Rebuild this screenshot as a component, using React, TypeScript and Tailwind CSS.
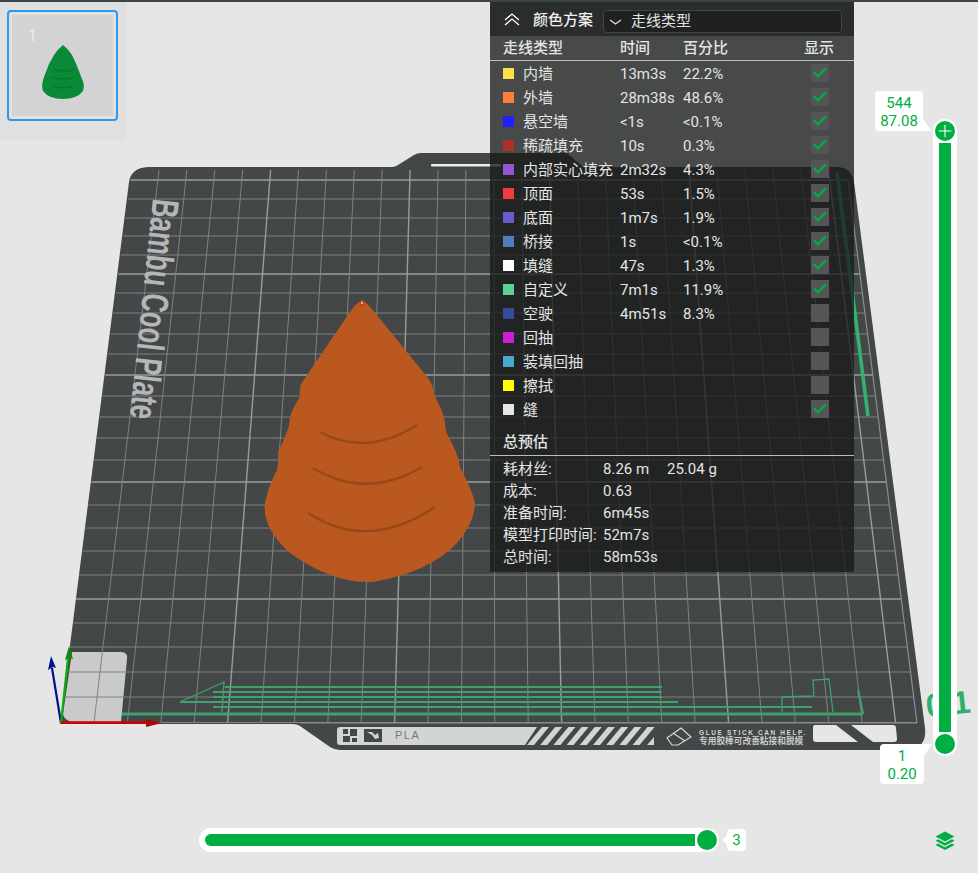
import React from 'react';
import { Check, Plus } from 'lucide-react';

const sans = "font-['Roboto','Noto_Sans_CJK_SC',sans-serif]";

const rows = [
  { name: '内墙', color: '#ffe04a', time: '13m3s', pct: '22.2%', on: true },
  { name: '外墙', color: '#ff7d38', time: '28m38s', pct: '48.6%', on: true },
  { name: '悬空墙', color: '#1f1fff', time: '<1s', pct: '<0.1%', on: true },
  { name: '稀疏填充', color: '#b03029', time: '10s', pct: '0.3%', on: true },
  { name: '内部实心填充', color: '#9654cc', time: '2m32s', pct: '4.3%', on: true },
  { name: '顶面', color: '#f03c3c', time: '53s', pct: '1.5%', on: true },
  { name: '底面', color: '#6b5ccc', time: '1m7s', pct: '1.9%', on: true },
  { name: '桥接', color: '#4d80ba', time: '1s', pct: '<0.1%', on: true },
  { name: '填缝', color: '#ffffff', time: '47s', pct: '1.3%', on: true },
  { name: '自定义', color: '#5ed194', time: '7m1s', pct: '11.9%', on: true },
  { name: '空驶', color: '#384a9c', time: '4m51s', pct: '8.3%', on: false },
  { name: '回抽', color: '#cc1fd1', time: '', pct: '', on: false },
  { name: '装填回抽', color: '#4aa8cc', time: '', pct: '', on: false },
  { name: '擦拭', color: '#ffff00', time: '', pct: '', on: false },
  { name: '缝', color: '#e6e6e6', time: '', pct: '', on: true },
];

const summary = [
  { label: '耗材丝:', value: '8.26 m', extra: '25.04 g' },
  { label: '成本:', value: '0.63' },
  { label: '准备时间:', value: '6m45s' },
  { label: '模型打印时间:', value: '52m7s' },
  { label: '总时间:', value: '58m53s' },
];

// bed grid, read off the perspective of the plate
const gridY = [180, 199, 218, 236, 255, 274, 293, 313, 334, 354, 375, 396, 417, 438, 460, 482, 505, 528, 551, 575, 599, 623, 647, 672, 697, 723];
const gridX = Array.from({ length: 25 }, (_, i) => i);

const CONE =
  'M362 300 Q366 302 372 309 L428 378 Q434 386 433 393 Q443 410 445 422 Q445 428 447 434 Q459 455 460 467 Q472 490 475 503 Q475 522 457 543 Q430 572 373 582 Q333 584 290 553 Q262 528 265 503 Q268 487 277 470 Q279 460 278 452 Q286 436 289 426 Q289 412 300 397 Q299 390 301 384 L350 312 Q356 303 362 300 Z';
const coneRings = Array.from({ length: 240 }, (_, i) => i);

function Bed() {
  return (
    <svg className="absolute inset-0" width="978" height="873" viewBox="0 0 978 873">
      <defs>
        <clipPath id="plate">
          <path d="M132 169 L842 169 L848 180 L917 723 L60 723 Z" />
        </clipPath>
        <clipPath id="cone">
          <path d={CONE} />
        </clipPath>
      </defs>

      <path
        d="M148 167 L392 167 Q395 167 398 165 L414 155 Q417 153 421 153 L567 153 L583 167 L838 167 Q852 168 854 182 L925 728 Q927 748 908 750 L340 750 Q335 750 330 747 L300 726 Q297 724 292 724 L60 724 L129 182 Q131 168 148 167 Z"
        fill="#434747"
      />
      <rect x="431" y="164" width="70" height="2.5" rx="1" fill="#eeeeee" />

      <path d="M72 652 L121 652 Q128 652 127 659 L121 722 L72 722 Q64 720 63 714 Z" fill="#c9cbca" />

      <g clipPath="url(#plate)" fill="none">
        {gridY.map((y, i) => (
          <line key={y} x1="40" x2="940" y1={y} y2={y} stroke={i % 5 === 0 ? '#999c9b' : '#7f8382'} strokeWidth={i % 5 === 0 ? 1.4 : 1} />
        ))}
        {gridX.map((i) => (
          <line
            key={i}
            x1={159 + 27.9 * i}
            y1="170"
            x2={94 + 33.4 * i}
            y2="723"
            stroke={i % 5 === 4 ? '#999c9b' : '#7f8382'}
            strokeWidth={i % 5 === 4 ? 1.4 : 1}
          />
        ))}
      </g>
      <path d="M848 180 L917 723 L300 723" fill="none" stroke="#8a8e8d" strokeWidth="1.2" />

      <text
        transform="translate(153 198) rotate(96)"
        textLength="221"
        lengthAdjust="spacingAndGlyphs"
        fontFamily="Liberation Sans, sans-serif"
        fontWeight="700"
        fontSize="38"
        fill="#b5b7b7"
      >
        Bambu Cool Plate
      </text>

      {/* travel / custom toolpath lines on the plate */}
      <g stroke="#3fa16b" fill="none">
        <path d="M225 687 H662 M213 692 H662 M213 697 H662 M180 702 H678 M213 707 H812" strokeWidth="2.2" />
        <path d="M122 714 H863" strokeWidth="3" />
        <path d="M180 702 L224 682 L222 712" strokeWidth="1.3" />
        <path d="M782 712 L782 697 L814 696 L813 680 L829 679 L833 712" strokeWidth="1.3" />
        <path d="M858 690 L863 714" strokeWidth="2.2" />
        <path d="M837 172 L868 416" strokeWidth="3.6" stroke="#36b070" />
      </g>

      {/* plate footer */}
      <path d="M340 727 H537 L525 745 H340 Q337 745 337 742 V730 Q337 727 340 727 Z" fill="#d3d5d4" />
      <rect x="343" y="729" width="14" height="13" fill="#434747" />
      <path d="M349 729 V735 H343 M351 742 V737 H357" stroke="#d3d5d4" strokeWidth="2" fill="none" />
      <rect x="364" y="729" width="18" height="13" fill="#434747" />
      <path d="M367 732 H372 L375 735 L378 733 L379 738 L375 739 L372 735 Z" fill="#d3d5d4" />
      <text x="395" y="739" fontFamily="Liberation Sans, sans-serif" fontSize="11" letterSpacing="1.5" fill="#77797a">
        PLA
      </text>
      {Array.from({ length: 9 }, (_, i) => (
        <path key={i} d={`M${527 + i * 13.2} 745 L${542 + i * 13.2} 727 L${549 + i * 13.2} 727 L${534 + i * 13.2} 745 Z`} fill="#d3d5d4" />
      ))}
      <path d="M647 745 L654 737 L654 745 Z" fill="#d3d5d4" />
      <path d="M667 738 L681 728 L691 737 L678 745 L672 745 Z M673 733 L685 741" fill="none" stroke="#d6d8d7" strokeWidth="1.2" />
      <text x="699" y="734.5" textLength="106" fontFamily="Liberation Sans, sans-serif" fontWeight="700" fontSize="6.5" fill="#d6d8d7">
        GLUE STICK CAN HELP.
      </text>
      <text x="699" y="744" fontFamily="Noto Sans CJK SC, sans-serif" fontWeight="700" fontSize="8.7" fill="#c8cac9">
        专用胶棒可改善粘接和脱模
      </text>
      <path d="M815 725 H836 L858 742 H816 Q813 742 813 739 V727 Q813 725 815 725 Z" fill="#e6e6e6" />
      <path d="M851 725 H893 Q896 725 896 728 L897 739 Q897 742 894 742 H873 Z" fill="#e6e6e6" />

      {/* printed model: the layer lines are what gives the moire */}
      <path d={CONE} fill="#bf5c22" />
      <g clipPath="url(#cone)" fill="none">
        {coneRings.map((i) => {
          const t = i / 239;
          const y = 300 + t * 230;
          const w = 6 + t * 170;
          return (
            <path
              key={i}
              d={`M${365 - w} ${y} Q365 ${y + w * 0.62} ${365 + w} ${y}`}
              stroke="#8c3e13"
              strokeOpacity="0.26"
              strokeWidth="0.6"
              strokeDasharray="2 1"
            />
          );
        })}
        <path d="M320 432 Q366 457 417 425" stroke="#8f4519" strokeOpacity="0.8" strokeWidth="2.4" />
        <path d="M313 468 Q366 500 422 467" stroke="#8f4519" strokeOpacity="0.8" strokeWidth="2.4" />
        <path d="M308 513 Q368 552 435 507" stroke="#8f4519" strokeOpacity="0.8" strokeWidth="2.4" />
      </g>
      <circle cx="362" cy="304" r="2.5" fill="#d8391f" />
      <circle cx="362" cy="303" r="0.9" fill="#f4e3da" />

      {/* axes */}
      <path d="M61 723 L52 668" stroke="#000f8a" strokeWidth="2.2" />
      <path d="M51 656 L56 668 L53 667 L48 670 Z" fill="#000f8a" />
      <path d="M61 723 L68 658" stroke="#06b10b" strokeWidth="2.2" />
      <path d="M69 646 L73 659 L69 658 L65 660 Z" fill="#0e8a12" />
      <path d="M61 722.5 H150" stroke="#d10000" strokeWidth="2.6" />
      <path d="M162 723 L146 719 L146 727 Z" fill="#a80808" />

      {/* plate number, hanging past the bed */}
      <text
        transform="translate(927 717) rotate(-6)"
        fontFamily="Liberation Sans, sans-serif"
        fontWeight="700"
        fontSize="32"
        fill="#2fb069"
      >
        <tspan>0</tspan>
        <tspan dx="9">1</tspan>
      </text>
    </svg>
  );
}

function Thumbnail() {
  return (
    <div className="absolute left-0 top-[2px] w-[127px] h-[138px] bg-[#e0e0e0] rounded-br pl-[7px] pt-2">
      <div className="relative w-[111px] h-[111px] rounded border-2 border-[#2b99f0] bg-[#e0e0e0] p-[3px]">
        <div className="w-full h-full bg-[#d3d3d3] pl-4 pt-2">
          <span className={`${sans} text-base leading-5 text-[#eeeeee]`}>1</span>
        </div>
        <svg className="absolute left-[31px] top-[32px]" width="46" height="56" viewBox="38 43 46 56">
          <path
            d="M61 44 Q66 48 70 54 Q73 60 75 65 L80 78 Q83 84 81 90 Q75 98 61 98 Q47 98 41 90 Q39 84 42 76 L47 63 Q50 58 52 54 Q56 48 61 44 Z"
            fill="#0a8a36"
          />
          <path d="M52 68 Q62 72 72 68 M50 76 Q61 80 73 76 M50 85 Q61 89 73 85" fill="none" stroke="#05501f" strokeWidth="0.7" strokeDasharray="3 1.5" />
        </svg>
      </div>
    </div>
  );
}

function Panel() {
  return (
    <div className={`${sans} absolute left-[490px] top-[2px] w-[364px] h-[570px] bg-[#191a1a]/[.77] text-[15px] text-[#e4e4e4]`}>
      <div className="flex items-center h-[34px] bg-[#2b2d2d] pl-[14px] pr-3">
        <svg width="16" height="13" viewBox="0 0 16 13" fill="none" stroke="#ffffff" strokeWidth="1.3">
          <path d="M1 7 L8 1 L15 7 M1 12 L8 6 L15 12" />
        </svg>
        <span className="ml-[13px] mt-[2px] w-[70px] font-medium text-[#f0f0f0]">颜色方案</span>
        <div className="flex items-center flex-1 h-[23px] mt-[5px] rounded border border-[#444646] bg-[#1f2121] pl-[5px]">
          <svg width="13" height="6" viewBox="0 0 13 6" fill="none" stroke="#e4e4e4" strokeWidth="1.2">
            <path d="M1 1 Q4 3 6.5 5 Q9 3 12 1" />
          </svg>
          <span className="ml-[9px]">走线类型</span>
        </div>
      </div>

      <div className="flex items-center h-[25px] pl-[13px] border-b border-[#bdbdbd] font-medium">
        <span className="w-[117px]">走线类型</span>
        <span className="w-[63px]">时间</span>
        <span className="w-[121px]">百分比</span>
        <span>显示</span>
      </div>

      {rows.map((r) => (
        <div key={r.name} className="flex items-center h-6 pl-[13px]">
          <span className="w-[11px] h-[11px] mr-[9px]" style={{ backgroundColor: r.color }} />
          <span className="w-[97px] pt-[2px] whitespace-nowrap">{r.name}</span>
          <span className="w-[63px] pt-[2px]">{r.time}</span>
          <span className="w-[128px] pt-[2px]">{r.pct}</span>
          <span className="flex items-center justify-center w-[18px] h-[18px] bg-[#555555]">
            {r.on && <Check className="w-4 h-4 text-[#00ae42]" strokeWidth={3.5} />}
          </span>
        </div>
      ))}

      <div className="flex items-end h-[35px] pl-[13px] pb-[2px] border-b border-[#bdbdbd] font-medium">总预估</div>

      <div className="pt-[2px] pl-[13px]">
        {summary.map((s) => (
          <div key={s.label} className="flex items-center h-[22px]">
            <span className="w-[100px] whitespace-nowrap">{s.label}</span>
            <span className="w-[64px]">{s.value}</span>
            {s.extra && <span>{s.extra}</span>}
          </div>
        ))}
      </div>
    </div>
  );
}

function LayerSlider() {
  return (
    <div className={`${sans} text-[15px] leading-[18px] text-[#00ae42] text-center`}>
      <div className="absolute left-[933px] top-[119px] w-6 h-[637px] rounded-full bg-white flex flex-col items-center justify-between">
        <div className="w-6 h-6 rounded-full border-2 border-white bg-[#00ae42] flex items-center justify-center">
          <Plus className="w-5 h-5 text-white" strokeWidth={1.3} />
        </div>
        <div className="w-3 flex-1 bg-[#00ae42]" />
        <div className="w-6 h-6 rounded-full border-2 border-white bg-[#00ae42]" />
      </div>

      <div className="absolute left-[875px] top-[91px] w-12 h-10 rounded-tl rounded-tr rounded-bl bg-white py-[3px]">
        <div>544</div>
        <div>87.08</div>
      </div>
      <div className="absolute left-[923px] top-[119px] w-[9px] h-3 bg-white [clip-path:polygon(0_0,100%_100%,0_100%)]" />

      <div className="absolute left-[880px] top-[744px] w-11 h-10 rounded-bl rounded-br rounded-tl bg-white py-[3px]">
        <div>1</div>
        <div>0.20</div>
      </div>
      <div className="absolute left-[924px] top-[744px] w-2 h-3 bg-white [clip-path:polygon(0_0,100%_0,0_100%)]" />
    </div>
  );
}

function MoveSlider() {
  return (
    <div className={`${sans} text-[15px] text-[#00ae42]`}>
      <div className="absolute left-[199px] top-[828px] w-[520px] h-6 rounded-full bg-white flex items-center pl-[6px]">
        <div className="flex-1 h-3 rounded-l-full bg-[#00ae42]" />
        <div className="w-6 h-6 rounded-full border-2 border-white bg-[#00ae42]" />
      </div>
      <div className="absolute left-[722px] top-[835px] w-[5px] h-[10px] bg-white [clip-path:polygon(100%_0,100%_100%,0_50%)]" />
      <div className="absolute left-[727px] top-[829px] w-[19px] h-[22px] rounded-sm bg-white flex items-center justify-center">3</div>
    </div>
  );
}

function LayersIcon() {
  return (
    <svg className="absolute left-[935px] top-[831px]" width="20" height="19" viewBox="0 0 20 19" fill="#00ae42">
      <path d="M10 0.5 L19.5 5.5 L10 10.5 L0.5 5.5 Z" />
      <path d="M3 8.3 L10 12 L17 8.3 L19.5 9.8 L10 14.8 L0.5 9.8 Z" />
      <path d="M3 12.6 L10 16.2 L17 12.6 L19.5 14 L10 19 L0.5 14 Z" />
    </svg>
  );
}

export default function App() {
  return (
    <div className="relative w-full h-[873px] overflow-hidden bg-[#e6e6e6]">
      <Bed />
      <div className="absolute inset-x-0 top-0 h-[2px] bg-[#3a4547]" />
      <Thumbnail />
      <Panel />
      <LayerSlider />
      <MoveSlider />
      <LayersIcon />
    </div>
  );
}
